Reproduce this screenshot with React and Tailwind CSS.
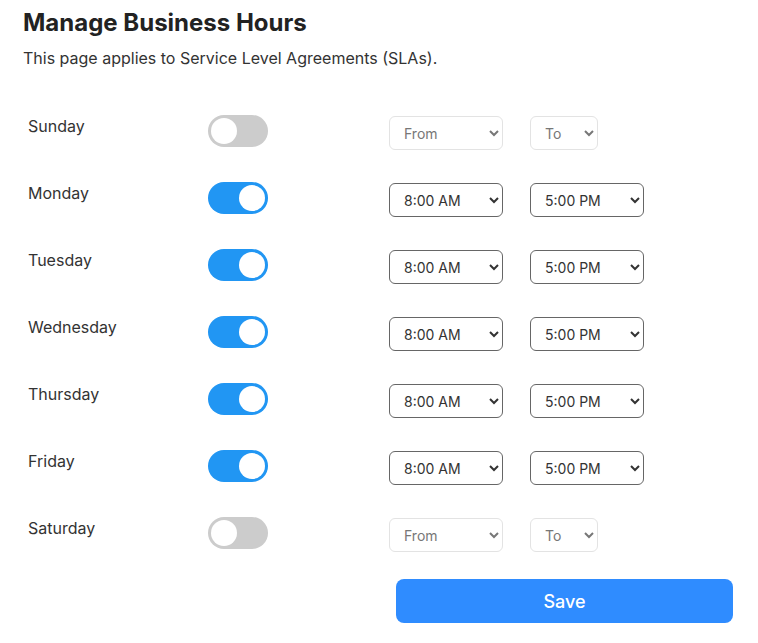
import React, { useState } from 'react';

const DAYS = ['Sunday', 'Monday', 'Tuesday', 'Wednesday', 'Thursday', 'Friday', 'Saturday'];

const TIMES = [
  '12:00 AM', '1:00 AM', '2:00 AM', '3:00 AM', '4:00 AM', '5:00 AM', '6:00 AM', '7:00 AM',
  '8:00 AM', '9:00 AM', '10:00 AM', '11:00 AM', '12:00 PM', '1:00 PM', '2:00 PM', '3:00 PM',
  '4:00 PM', '5:00 PM', '6:00 PM', '7:00 PM', '8:00 PM', '9:00 PM', '10:00 PM', '11:00 PM',
];

function Toggle({ on, onChange }) {
  return (
    <button
      type="button"
      onClick={onChange}
      className={`relative w-[60px] h-[32px] rounded-full transition-colors ${on ? 'bg-[#2196f3]' : 'bg-[#cccccc]'}`}
    >
      <span
        className={`absolute top-[3px] w-[26px] h-[26px] rounded-full bg-white transition-all ${on ? 'left-[31px]' : 'left-[3px]'}`}
      />
    </button>
  );
}

function TimeSelect({ value, placeholder, disabled, onChange, width }) {
  return (
    <select
      value={disabled ? '' : value}
      disabled={disabled}
      onChange={(e) => onChange(e.target.value)}
      className={`h-[34px] rounded-md border pl-[10px] pr-1 text-[14px] bg-white ${width} ${
        disabled ? 'border-[#e3e3e3] text-[#777]' : 'border-[#666] text-[#333]'
      }`}
    >
      {disabled ? (
        <option value="">{placeholder}</option>
      ) : (
        TIMES.map((t) => (
          <option key={t} value={t}>
            {t}
          </option>
        ))
      )}
    </select>
  );
}

export default function App() {
  const [hours, setHours] = useState(
    DAYS.map((d, i) => ({ day: d, open: i > 0 && i < 6, from: '8:00 AM', to: '5:00 PM' }))
  );

  const update = (i, patch) =>
    setHours((prev) => prev.map((h, idx) => (idx === i ? { ...h, ...patch } : h)));

  return (
    <div className="min-h-screen bg-white px-[23px] pt-[7px] font-['Inter',sans-serif] text-[#333]">
      <h1 className="text-[24px] leading-[32px] font-bold text-[#222]">Manage Business Hours</h1>
      <p className="mt-[7px] text-[16px] leading-[24px] text-[#333]">
        This page applies to Service Level Agreements (SLAs).
      </p>

      {/* Day rows */}
      <div className="mt-[45px] flex flex-col gap-[33px] pl-[5px]">
        {hours.map((h, i) => (
          <div key={h.day} className="grid grid-cols-[180px_181px_1fr] items-start h-[34px]">
            <span className="text-[16px] leading-[24px] -mt-px">{h.day}</span>
            <Toggle on={h.open} onChange={() => update(i, { open: !h.open })} />
            <div className="flex gap-[27px] mt-px">
              <TimeSelect
                value={h.from}
                placeholder="From"
                disabled={!h.open}
                width="w-[114px]"
                onChange={(v) => update(i, { from: v })}
              />
              <TimeSelect
                value={h.to}
                placeholder="To"
                disabled={!h.open}
                width={h.open ? 'w-[114px]' : 'w-[68px]'}
                onChange={(v) => update(i, { to: v })}
              />
            </div>
          </div>
        ))}
      </div>

      <button
        type="button"
        className="mt-[28px] ml-[373px] w-[337px] h-[44px] rounded-lg bg-[#2f8cff] text-white text-[18px] font-medium"
      >
        Save
      </button>
    </div>
  );
}
